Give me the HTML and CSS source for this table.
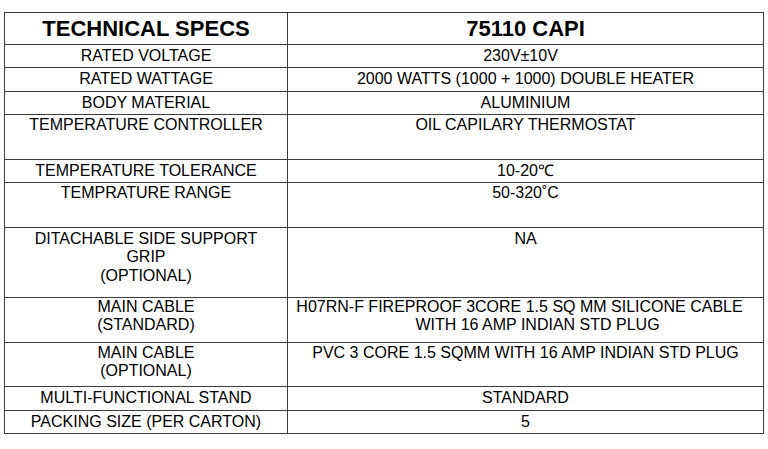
FILE: index.html
```html
<!DOCTYPE html>
<html>
<head>
<meta charset="utf-8">
<link rel="stylesheet" href="styles.css">
</head>
<body>
<div class="page">
  <div class="specs">
    <div class="cell head">TECHNICAL SPECS</div>
    <div class="cell head">75110 CAPI</div>

    <div class="cell mid">RATED VOLTAGE</div>
    <div class="cell mid"><span class="shift-l">230V±10V</span></div>

    <div class="cell mid">RATED WATTAGE</div>
    <div class="cell mid">2000 WATTS (1000 + 1000) DOUBLE HEATER</div>

    <div class="cell mid">BODY MATERIAL</div>
    <div class="cell mid">ALUMINIUM</div>

    <div class="cell top">TEMPERATURE CONTROLLER</div>
    <div class="cell top">OIL CAPILARY THERMOSTAT</div>

    <div class="cell mid">TEMPERATURE TOLERANCE</div>
    <div class="cell mid">10-20℃</div>

    <div class="cell top">TEMPRATURE RANGE</div>
    <div class="cell top">50-320˚C</div>

    <div class="cell top pad2">DITACHABLE SIDE SUPPORT<br>GRIP<br>(OPTIONAL)</div>
    <div class="cell top pad2">NA</div>

    <div class="cell top pad0">MAIN CABLE<br>(STANDARD)</div>
    <div class="cell top pad0"><span class="line l1">H07RN-F FIREPROOF 3CORE 1.5 SQ MM SILICONE CABLE</span><span class="line l2">WITH 16 AMP INDIAN STD PLUG</span></div>

    <div class="cell top">MAIN CABLE<br>(OPTIONAL)</div>
    <div class="cell top">PVC 3 CORE 1.5 SQMM WITH 16 AMP INDIAN STD PLUG</div>

    <div class="cell mid">MULTI-FUNCTIONAL STAND</div>
    <div class="cell mid">STANDARD</div>

    <div class="cell mid">PACKING SIZE (PER CARTON)</div>
    <div class="cell mid">5</div>
  </div>
</div>
</body>
</html>
```

FILE: styles.css
```css
html, body {
  margin: 0;
  padding: 0;
  background: #ffffff;
}

.page {
  padding: 12px 0 0 4px;
}

.specs {
  display: grid;
  width: 758px;
  grid-template-columns: 282px 475px;
  grid-template-rows: 31px 22px 23px 22px 44px 22px 44px 69px 44px 43px 23px 22px;
  gap: 1px;
  padding: 1px;
  background: #3c3c3c;
  font-family: "Liberation Sans", Arial, sans-serif;
  font-size: 16px;
  line-height: 18.4px;
  color: #000000;
}

.cell {
  background: #ffffff;
  text-align: center;
  display: flex;
  flex-direction: column;
  align-items: center;
  overflow: hidden;
  white-space: nowrap;
}

.head {
  font-weight: bold;
  font-size: 22px;
  line-height: 25px;
  justify-content: center;
}

.mid {
  justify-content: center;
}

.top {
  justify-content: flex-start;
  padding-top: 1px;
}

.pad2 {
  padding-top: 2px;
}

.pad0 {
  padding-top: 0;
}

.shift-l {
  margin-right: 10px;
}

.line {
  display: block;
}

.l1 {
  margin-right: 12px;
}

.l2 {
  padding-left: 24px;
}
```
